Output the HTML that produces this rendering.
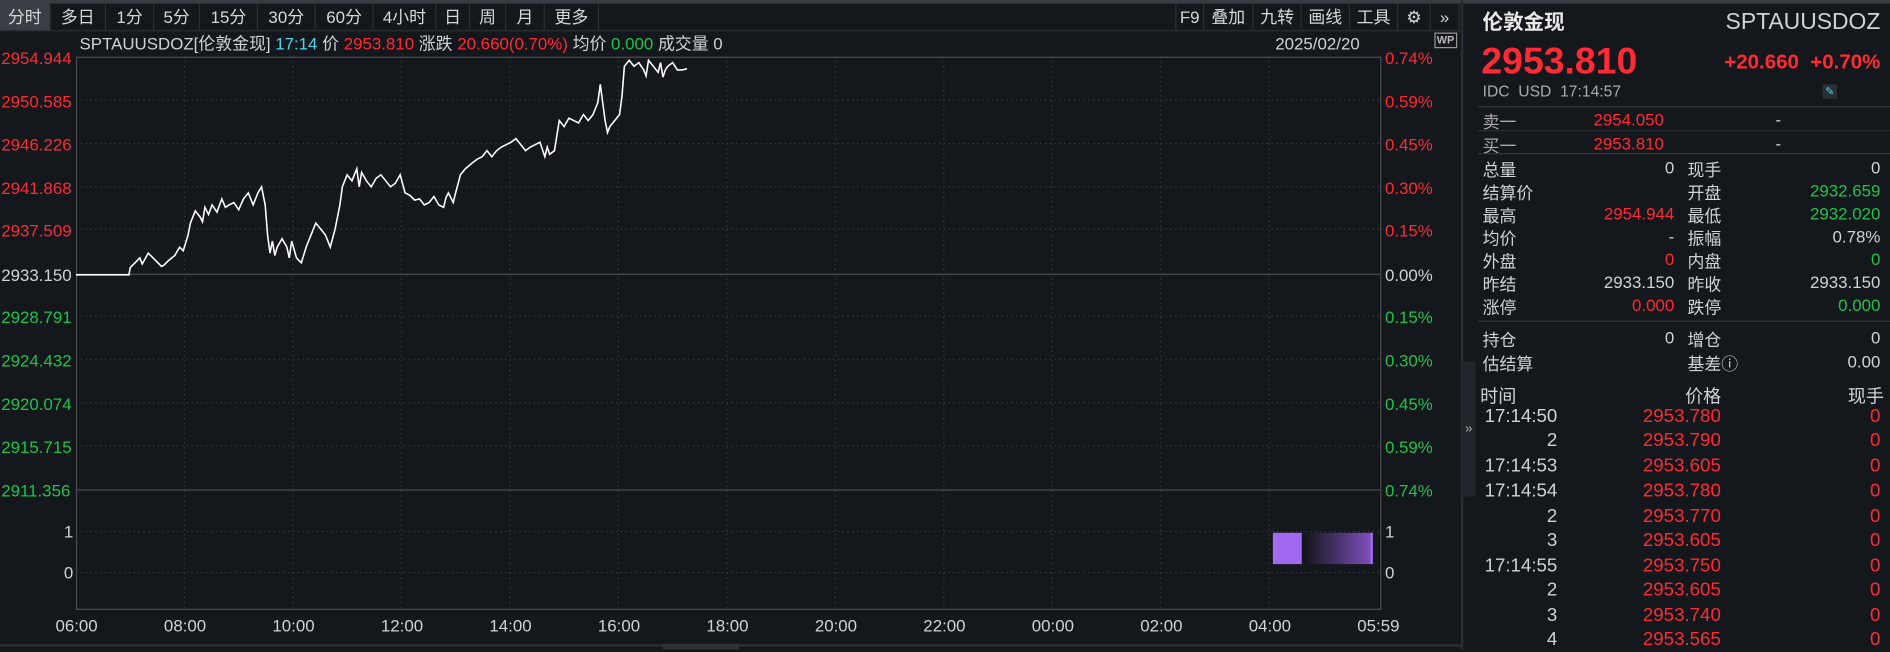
<!DOCTYPE html>
<html><head><meta charset="utf-8"><style>
*{margin:0;padding:0;box-sizing:border-box}
html,body{width:1890px;height:649px;overflow:hidden;background:#14171c}
#w{position:absolute;left:0;top:0;width:1568px;height:539px;transform:scale(1.20536);transform-origin:0 0;font-family:"Liberation Sans","Noto Sans CJK SC",sans-serif;color:#cfd2d6;font-size:14px}
.a{position:absolute;white-space:nowrap;line-height:1}
.r{color:#ff2a33}.g{color:#1fc24d}.c{color:#4fd6ee}
.tb{position:absolute;top:3px;height:22px;border-right:1px solid #2c2f35;text-align:center;line-height:22px;font-size:14px;color:#d6d8da}
.row{position:absolute;left:1230px;width:330px;height:19px;font-size:14px}
.row span{position:absolute;top:0}
.tr{font-size:15.5px}
</style></head><body><div id="w">
<div style="position:absolute;left:0;top:0;width:1568px;height:3px;background:#3a3d44"></div>
<div style="position:absolute;left:0;top:25px;width:1212px;height:1px;background:#2c2f35"></div>
<div class="tb" style="left:0;width:42px;background:#3b3e45">分时</div>
<div class="tb" style="left:42px;width:46px">多日</div>
<div class="tb" style="left:88px;width:40px">1分</div>
<div class="tb" style="left:128px;width:38px">5分</div>
<div class="tb" style="left:166px;width:48px">15分</div>
<div class="tb" style="left:214px;width:48px">30分</div>
<div class="tb" style="left:262px;width:48px">60分</div>
<div class="tb" style="left:310px;width:52px">4小时</div>
<div class="tb" style="left:362px;width:28px">日</div>
<div class="tb" style="left:390px;width:30px">周</div>
<div class="tb" style="left:420px;width:32px">月</div>
<div class="tb" style="left:452px;width:45px">更多</div>
<div class="tb" style="left:975px;width:24px;border-left:1px solid #2c2f35">F9</div>
<div class="tb" style="left:999px;width:41px">叠加</div>
<div class="tb" style="left:1040px;width:40px">九转</div>
<div class="tb" style="left:1080px;width:40px">画线</div>
<div class="tb" style="left:1120px;width:40px">工具</div>
<div class="tb" style="left:1160px;width:27px">⚙</div>
<div class="tb" style="left:1187px;width:24px">»</div>

<div class="a" style="left:66px;top:29px;font-size:14px">SPTAUUSDOZ[伦敦金现] <span class="c">17:14</span> 价 <span class="r">2953.810</span> 涨跌 <span class="r">20.660(0.70%)</span> 均价 <span class="g">0.000</span> 成交量 0</div>
<div class="a" style="left:1058px;top:29px">2025/02/20</div>
<div class="a" style="left:1190px;top:27px;font-size:9px;border:1px solid #999;padding:1px;color:#bbb;font-weight:bold">WP</div>

<svg style="position:absolute;left:0;top:0" width="1213" height="539">
<g stroke="#3a3d42" stroke-dasharray="1,3" stroke-width="1">
<line x1="63" y1="83" x2="1145" y2="83"/><line x1="63" y1="119" x2="1145" y2="119"/><line x1="63" y1="155" x2="1145" y2="155"/><line x1="63" y1="190" x2="1145" y2="190"/><line x1="63" y1="262" x2="1145" y2="262"/><line x1="63" y1="298" x2="1145" y2="298"/><line x1="63" y1="334" x2="1145" y2="334"/><line x1="63" y1="370" x2="1145" y2="370"/><line x1="63" y1="441" x2="1145" y2="441"/><line x1="63" y1="475" x2="1145" y2="475"/>
<line x1="153" y1="47" x2="153" y2="505"/><line x1="243" y1="47" x2="243" y2="505"/><line x1="333" y1="47" x2="333" y2="505"/><line x1="423" y1="47" x2="423" y2="505"/><line x1="513" y1="47" x2="513" y2="505"/><line x1="603" y1="47" x2="603" y2="505"/><line x1="693" y1="47" x2="693" y2="505"/><line x1="783" y1="47" x2="783" y2="505"/><line x1="873" y1="47" x2="873" y2="505"/><line x1="963" y1="47" x2="963" y2="505"/><line x1="1053" y1="47" x2="1053" y2="505"/>
</g>
<g stroke="#4a4d52" stroke-width="1" fill="none">
<rect x="63.5" y="47.5" width="1082" height="458"/>
<line x1="63" y1="227.5" x2="1145" y2="227.5"/><line x1="63" y1="406.5" x2="1145" y2="406.5"/>
</g>
<polyline fill="none" stroke="#fff" stroke-width="1.3" points="63,228 107,228 108,222 112,218 116,214 118,219 123,210 127,214 131,218 134,221 136,220 140,216 145,212 149,205 152,208 156,195 158,185 162,175 166,180 168,184 170,172 173,178 176,170 180,176 184,165 187,172 190,170 194,168 198,174 202,165 206,160 210,170 214,160 217,155 220,170 222,195 224,210 226,200 228,212 230,205 234,198 238,205 240,214 242,200 246,214 250,218 254,205 258,195 262,185 266,190 270,195 274,205 278,190 282,170 284,155 288,145 292,150 296,140 298,155 300,143 304,150 308,155 312,148 316,145 320,150 324,155 328,152 332,145 336,160 340,162 344,166 348,165 352,170 356,168 360,163 364,170 368,172 370,164 372,160 376,168 378,160 382,145 386,140 392,135 396,132 400,130 404,125 408,130 412,125 416,122 420,120 424,118 428,115 432,120 436,125 440,122 444,120 448,118 452,130 454,122 456,128 460,125 464,100 468,105 472,98 476,100 480,102 484,95 488,100 492,95 496,85 498,70 500,85 502,100 504,110 506,105 510,100 514,95 516,80 518,55 522,50 526,55 530,52 534,58 536,63 538,50 542,55 546,60 548,52 550,64 552,58 554,55 558,52 562,58 566,58 570,57"/>
<rect x="1056" y="442" width="24" height="26" fill="#a268f0"/>
<defs><linearGradient id="gr" x1="0" x2="1"><stop offset="0" stop-color="#14171c"/><stop offset="1" stop-color="#9a5ee8"/></linearGradient></defs>
<rect x="1082" y="442" width="56" height="26" fill="url(#gr)" opacity=".8"/>
<line x1="1138" y1="442" x2="1138" y2="468" stroke="#a268f0" stroke-width="2"/>
<rect x="550" y="534" width="63" height="5" fill="#2e3137"/>
<line x1="0" y1="535.5" x2="1213" y2="535.5" stroke="#2e3137" stroke-width="2"/>
</svg>

<div class="a r" style="left:1px;top:41px">2954.944</div>
<div class="a r" style="left:1px;top:77px">2950.585</div>
<div class="a r" style="left:1px;top:113px">2946.226</div>
<div class="a r" style="left:1px;top:149px">2941.868</div>
<div class="a r" style="left:1px;top:184px">2937.509</div>
<div class="a" style="left:1px;top:221px">2933.150</div>
<div class="a g" style="left:1px;top:256px">2928.791</div>
<div class="a g" style="left:1px;top:292px">2924.432</div>
<div class="a g" style="left:1px;top:328px">2920.074</div>
<div class="a g" style="left:1px;top:364px">2915.715</div>
<div class="a g" style="left:1px;top:400px">2911.356</div>
<div class="a" style="left:53px;top:434px">1</div>
<div class="a" style="left:53px;top:468px">0</div>
<div class="a r" style="left:1149px;top:41px">0.74%</div>
<div class="a r" style="left:1149px;top:77px">0.59%</div>
<div class="a r" style="left:1149px;top:113px">0.45%</div>
<div class="a r" style="left:1149px;top:149px">0.30%</div>
<div class="a r" style="left:1149px;top:184px">0.15%</div>
<div class="a" style="left:1149px;top:221px">0.00%</div>
<div class="a g" style="left:1149px;top:256px">0.15%</div>
<div class="a g" style="left:1149px;top:292px">0.30%</div>
<div class="a g" style="left:1149px;top:328px">0.45%</div>
<div class="a g" style="left:1149px;top:364px">0.59%</div>
<div class="a g" style="left:1149px;top:400px">0.74%</div>
<div class="a" style="left:1149px;top:434px">1</div>
<div class="a" style="left:1149px;top:468px">0</div>
<div class="a" style="left:46px;top:512px">06:00</div><div class="a" style="left:136px;top:512px">08:00</div><div class="a" style="left:226px;top:512px">10:00</div><div class="a" style="left:316px;top:512px">12:00</div><div class="a" style="left:406px;top:512px">14:00</div><div class="a" style="left:496px;top:512px">16:00</div><div class="a" style="left:586px;top:512px">18:00</div><div class="a" style="left:676px;top:512px">20:00</div><div class="a" style="left:766px;top:512px">22:00</div><div class="a" style="left:856px;top:512px">00:00</div><div class="a" style="left:946px;top:512px">02:00</div><div class="a" style="left:1036px;top:512px">04:00</div><div class="a" style="left:1126px;top:512px">05:59</div>

<div style="position:absolute;left:1212px;top:0;width:2px;height:539px;background:#2a2d33"></div>
<div style="position:absolute;left:1213px;top:300px;width:11px;height:112px;background:#22252b;font-size:11px;color:#aaa;padding-top:50px;text-align:center">»</div>
<div class="a" style="left:1230px;top:10px;font-size:17px;font-weight:bold;color:#e8e8e8">伦敦金现</div>
<div class="a" style="right:8px;top:9px;font-size:19px;color:#cfd2d6">SPTAUUSDOZ</div>
<div class="a r" style="left:1229px;top:35px;font-size:31px;font-weight:bold">2953.810</div>
<div class="a r" style="right:8px;top:43px;font-size:17px;font-weight:bold">+20.660&nbsp; +0.70%</div>
<div class="a" style="left:1230px;top:69px;font-size:13px;color:#aaa">IDC&nbsp; USD&nbsp; 17:14:57</div>
<div style="position:absolute;left:1512px;top:70px;width:12px;height:12px;background:#2a2f36;color:#4fd6ee;font-size:9px;text-align:center;line-height:12px">✎</div>
<div style="position:absolute;left:1226px;top:88px;width:342px;height:1px;background:#33363c"></div>
<div class="row" style="top:91px"><span style="color:#aaa">卖一</span><span class="r" style="left:92px">2954.050</span><span style="left:243px">-</span></div>
<div style="position:absolute;left:1226px;top:108px;width:342px;height:1px;background:#2a2d33"></div>
<div class="row" style="top:111px"><span style="color:#aaa">买一</span><span class="r" style="left:92px">2953.810</span><span style="left:243px">-</span></div>
<div style="position:absolute;left:1226px;top:127px;width:342px;height:1px;background:#33363c"></div>
<div class="row" style="top:131px"><span>总量</span><span style="right:171px">0</span><span style="left:170px">现手</span><span style="right:0">0</span></div>
<div class="row" style="top:150px"><span>结算价</span><span style="left:170px">开盘</span><span class="g" style="right:0">2932.659</span></div>
<div class="row" style="top:169px"><span>最高</span><span class="r" style="right:171px">2954.944</span><span style="left:170px">最低</span><span class="g" style="right:0">2932.020</span></div>
<div class="row" style="top:188px"><span>均价</span><span style="right:171px">-</span><span style="left:170px">振幅</span><span style="right:0">0.78%</span></div>
<div class="row" style="top:207px"><span>外盘</span><span class="r" style="right:171px">0</span><span style="left:170px">内盘</span><span class="g" style="right:0">0</span></div>
<div class="row" style="top:226px"><span>昨结</span><span style="right:171px">2933.150</span><span style="left:170px">昨收</span><span style="right:0">2933.150</span></div>
<div class="row" style="top:245px"><span>涨停</span><span class="r" style="right:171px">0.000</span><span style="left:170px">跌停</span><span class="g" style="right:0">0.000</span></div>
<div style="position:absolute;left:1226px;top:266px;width:342px;height:1px;background:#33363c"></div>
<div class="row" style="top:272px"><span>持仓</span><span style="right:171px">0</span><span style="left:170px">增仓</span><span style="right:0">0</span></div>
<div class="row" style="top:292px"><span>估结算</span><span style="left:170px">基差ⓘ</span><span style="right:0">0.00</span></div>
<div class="row" style="top:318px;left:1228px;width:335px"><span style="font-size:15px">时间</span><span style="left:170px;font-size:15px">价格</span><span style="right:0;font-size:15px">现手</span></div>
<div class="row tr" style="top:337px;left:1228px;width:332px"><span style="right:268px">17:14:50</span><span class="r" style="left:135px">2953.780</span><span class="r" style="right:0">0</span></div>
<div class="row tr" style="top:357px;left:1228px;width:332px"><span style="right:268px">2</span><span class="r" style="left:135px">2953.790</span><span class="r" style="right:0">0</span></div>
<div class="row tr" style="top:378px;left:1228px;width:332px"><span style="right:268px">17:14:53</span><span class="r" style="left:135px">2953.605</span><span class="r" style="right:0">0</span></div>
<div class="row tr" style="top:399px;left:1228px;width:332px"><span style="right:268px">17:14:54</span><span class="r" style="left:135px">2953.780</span><span class="r" style="right:0">0</span></div>
<div class="row tr" style="top:420px;left:1228px;width:332px"><span style="right:268px">2</span><span class="r" style="left:135px">2953.770</span><span class="r" style="right:0">0</span></div>
<div class="row tr" style="top:440px;left:1228px;width:332px"><span style="right:268px">3</span><span class="r" style="left:135px">2953.605</span><span class="r" style="right:0">0</span></div>
<div class="row tr" style="top:461px;left:1228px;width:332px"><span style="right:268px">17:14:55</span><span class="r" style="left:135px">2953.750</span><span class="r" style="right:0">0</span></div>
<div class="row tr" style="top:481px;left:1228px;width:332px"><span style="right:268px">2</span><span class="r" style="left:135px">2953.605</span><span class="r" style="right:0">0</span></div>
<div class="row tr" style="top:502px;left:1228px;width:332px"><span style="right:268px">3</span><span class="r" style="left:135px">2953.740</span><span class="r" style="right:0">0</span></div>
<div class="row tr" style="top:522px;left:1228px;width:332px"><span style="right:268px">4</span><span class="r" style="left:135px">2953.565</span><span class="r" style="right:0">0</span></div>
</div></body></html>
